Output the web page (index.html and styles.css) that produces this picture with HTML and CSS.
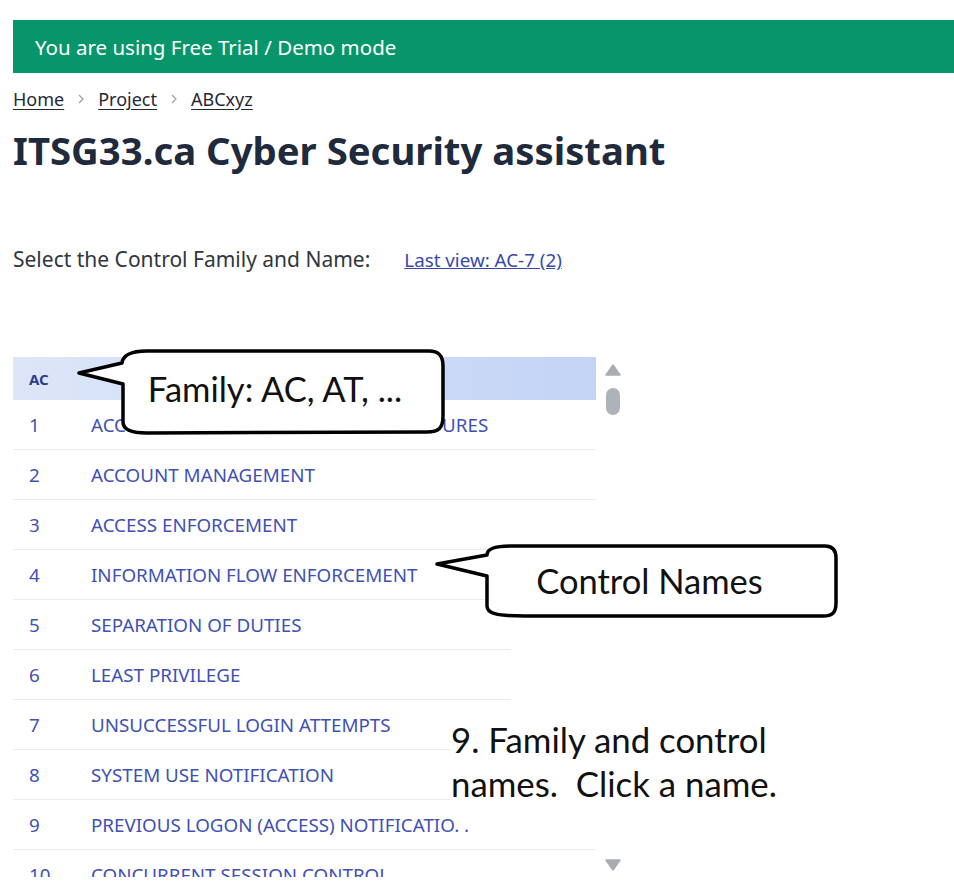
FILE: index.html
```html
<!DOCTYPE html>
<html lang="en">
<head>
<meta charset="utf-8">
<title>ITSG33.ca Cyber Security assistant</title>
<link rel="stylesheet" href="styles.css">
</head>
<body>
<div class="page">
  <div class="banner">You are using Free Trial / Demo mode</div>
  <nav class="crumbs">
    <a href="#">Home</a>
    <svg class="chev" viewBox="0 0 8 12" width="8" height="12"><path d="M2 2 L6 6 L2 10" fill="none" stroke="#9aa0a8" stroke-width="1.2"/></svg>
    <a href="#">Project</a>
    <svg class="chev" viewBox="0 0 8 12" width="8" height="12"><path d="M2 2 L6 6 L2 10" fill="none" stroke="#9aa0a8" stroke-width="1.2"/></svg>
    <a href="#">ABCxyz</a>
  </nav>
  <h1 class="title">ITSG33.ca Cyber Security assistant</h1>
  <div class="select-line">
    <span class="select-label">Select the Control Family and Name:</span>
    <a class="last-view" href="#">Last view: AC-7 (2)</a>
  </div>

  <div class="list-wrap">
    <div class="list">
      <div class="row head"><span class="fam">AC</span></div>
      <div class="row"><span class="num">1</span><span class="name">ACCESS CONTROL POLICY AND PROCEDURES</span></div>
      <div class="row"><span class="num">2</span><span class="name">ACCOUNT MANAGEMENT</span></div>
      <div class="row"><span class="num">3</span><span class="name">ACCESS ENFORCEMENT</span></div>
      <div class="row"><span class="num">4</span><span class="name">INFORMATION FLOW ENFORCEMENT</span></div>
      <div class="row"><span class="num">5</span><span class="name">SEPARATION OF DUTIES</span></div>
      <div class="row"><span class="num">6</span><span class="name">LEAST PRIVILEGE</span></div>
      <div class="row"><span class="num">7</span><span class="name">UNSUCCESSFUL LOGIN ATTEMPTS</span></div>
      <div class="row"><span class="num">8</span><span class="name">SYSTEM USE NOTIFICATION</span></div>
      <div class="row"><span class="num">9</span><span class="name">PREVIOUS LOGON (ACCESS) NOTIFICATIO. .</span></div>
      <div class="row"><span class="num">10</span><span class="name">CONCURRENT SESSION CONTROL</span></div>
      <div class="row"><span class="num">11</span><span class="name">SESSION LOCK</span></div>
    </div>
    <div class="scrollbar">
      <svg class="arrow" viewBox="0 0 16 12" width="16" height="12"><path d="M8 1 L15 11 L1 11 Z" fill="#a9adb3" stroke="#a9adb3" stroke-linejoin="round" stroke-width="1.5"/></svg>
      <div class="thumb"></div>
      <div class="track"></div>
      <svg class="arrow" viewBox="0 0 16 12" width="16" height="12"><path d="M1 1 L15 1 L8 11 Z" fill="#a9adb3" stroke="#a9adb3" stroke-linejoin="round" stroke-width="1.5"/></svg>
    </div>
  </div>

  <!-- annotation overlays -->
  <div class="callout callout-family">
    <svg class="bubble" viewBox="0 0 370 88" width="370" height="88">
      <path d="M2 25 L45 15 C46 7 55 3 70 3 L352 3 C362 3 366 8 366 18 L366 68 C366 80 362 84 350 84 L70 85 C54 85 46 81 46 74 L46 36 Z" fill="#fff" stroke="#000" stroke-width="3.5" stroke-linejoin="round"/>
    </svg>
    <span class="callout-text">Family: AC, AT, ...</span>
  </div>

  <div class="white-patch"></div>

  <div class="callout callout-names">
    <svg class="bubble" viewBox="0 0 405 76" width="405" height="76">
      <path d="M2 21 L52 12 C52 6 60 3 75 3 L390 3 C398 3 401 8 401 15 L401 60 C401 70 397 73 388 73 L90 73 C60 73 52 70 52 63 L52 33 Z" fill="#fff" stroke="#000" stroke-width="3.5" stroke-linejoin="round"/>
    </svg>
    <span class="callout-text">Control Names</span>
  </div>

  <div class="note">9. Family and control<br>names.&nbsp; Click a name.</div>
</div>
</body>
</html>
```
FILE: styles.css
```css
html, body {
  margin: 0;
  padding: 0;
  background: #fff;
}
body {
  font-family: "Noto Sans", "Open Sans", sans-serif;
  color: #1f2937;
}
.page {
  position: relative;
  padding: 20px 0 0 13px;
  height: 869px;
  overflow: hidden;
}
.banner {
  background: #07966a;
  color: #fff;
  height: 53px;
  display: flex;
  align-items: center;
  padding-left: 22px;
  font-size: 20.5px;
}
.crumbs {
  display: flex;
  align-items: center;
  gap: 13px;
  margin-top: 15px;
  height: 22px;
  font-size: 18px;
}
.crumbs a {
  color: #1f2937;
  text-decoration: underline;
  text-underline-offset: 3px;
}
.chev { display: block; }
.title {
  margin: 16px 0 0;
  font-size: 38.3px;
  font-weight: 700;
  color: #1f2a3c;
  line-height: 48px;
}
.select-line {
  display: flex;
  align-items: baseline;
  gap: 34px;
  margin-top: 70px;
  height: 30px;
  line-height: 30px;
}
.select-label {
  font-size: 21px;
  color: #2f3640;
}
.last-view {
  font-size: 18.8px;
  color: #3949ab;
  text-decoration: underline;
}
.list-wrap {
  display: flex;
  margin-top: 83px;
  height: 520px;
}
.list {
  width: 583px;
  height: 520px;
  overflow: hidden;
}
.row {
  display: flex;
  align-items: center;
  height: 49px;
  border-bottom: 1px solid #ececec;
  color: #3f51b5;
  font-size: 18.8px;
}
.row.head {
  height: 43px;
  border-bottom: 0;
  background: linear-gradient(90deg, #dde6f8 0%, #c3d4f5 100%);
}
.fam {
  padding-left: 16px;
  font-size: 15px;
  font-weight: 700;
  color: #2f3e8c;
}
.num {
  width: 78px;
  padding-left: 16px;
  box-sizing: border-box;
}
.name {
  white-space: nowrap;
}
.scrollbar {
  width: 30px;
  display: flex;
  flex-direction: column;
  align-items: center;
  padding-top: 7px;
  padding-left: 2px;
}
.arrow { display: block; }
.thumb {
  width: 14px;
  height: 27px;
  border-radius: 7px;
  background: #aeb3b9;
  margin-top: 12px;
}
.track {
  flex: 0 0 444px;
}
.callout {
  position: absolute;
  display: flex;
  align-items: center;
  justify-content: center;
}
.bubble {
  position: absolute;
  left: 0;
  top: 0;
}
.callout-text {
  position: relative;
  font-family: "Lato", "Open Sans", sans-serif;
  color: #111;
  white-space: nowrap;
}
.callout-family {
  left: 77px;
  top: 348px;
  width: 370px;
  height: 88px;
}
.callout-family .callout-text {
  font-size: 34.5px;
  margin-left: 26px;
  margin-top: -8px;
}
.callout-names {
  left: 435px;
  top: 543px;
  width: 405px;
  height: 76px;
}
.callout-names .callout-text {
  font-size: 34.5px;
  margin-left: 24px;
  margin-top: -2px;
}
.white-patch {
  position: absolute;
  left: 511px;
  top: 630px;
  width: 90px;
  height: 76px;
  background: #fff;
}
.note {
  position: absolute;
  left: 451px;
  top: 712px;
  width: 370px;
  height: 100px;
  padding-top: 6px;
  box-sizing: border-box;
  background: #fff;
  font-family: "Lato", "Open Sans", sans-serif;
  font-size: 34.8px;
  line-height: 44px;
  color: #111;
  white-space: nowrap;
}
```
